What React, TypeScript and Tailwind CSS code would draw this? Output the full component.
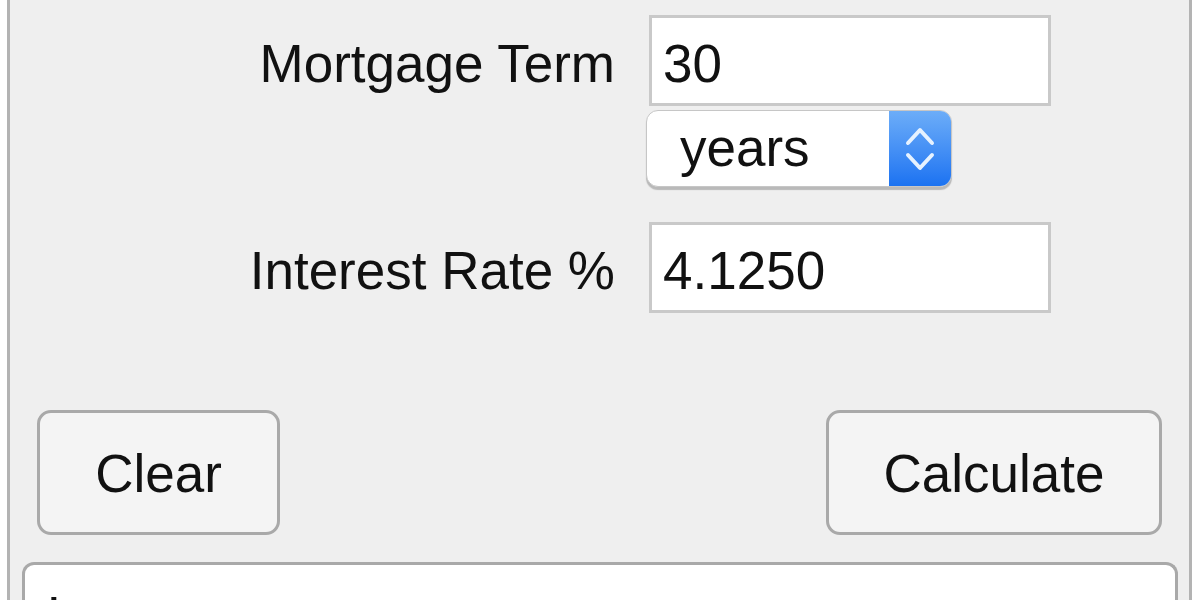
import React from 'react';

const font = { fontFamily: '"Liberation Sans", Arial, Helvetica, sans-serif' };

function TextBox({ value }: { value: string }) {
  return (
    <div className="w-[402px] h-[91px] border-[3px] border-[#c9c9c9] bg-white flex items-center pl-[11px]">
      <span className="text-[53px] leading-none text-[#111] pt-[6px]">{value}</span>
    </div>
  );
}

function Stepper() {
  return (
    <svg width="30" height="44" viewBox="0 0 30 44" fill="none">
      <path d="M3 16 L15 3 L27 16" stroke="#e6f2ff" strokeWidth="4" strokeLinecap="round" strokeLinejoin="round" />
      <path d="M3 28 L15 41 L27 28" stroke="#e6f2ff" strokeWidth="4" strokeLinecap="round" strokeLinejoin="round" />
    </svg>
  );
}

export default function App() {
  return (
    <div className="min-h-screen bg-white text-[#111]" style={font}>
      <div className="ml-[7px] w-[1185px] h-[600px] border-x-[3px] border-[#b3b3b3] bg-[#efefef] overflow-hidden flex flex-col">
        {/* Mortgage term */}
        <div className="flex items-center pt-[15px]">
          <div className="w-[605px] text-right text-[53px] leading-none pt-[6px]">Mortgage Term</div>
          <div className="ml-[34px]">
            <TextBox value="30" />
          </div>
        </div>

        {/* Term units select */}
        <div className="mt-[4px] pl-[636px]">
          <div className="w-[306px] h-[77px] rounded-[12px] border border-[#c6c6c6] bg-white shadow-[0_3px_1px_#b9b9b9] flex overflow-hidden">
            <div className="flex-1 flex items-center pl-[33px]">
              <span className="text-[53px] leading-none pb-[2px]">years</span>
            </div>
            <div className="w-[62px] h-full bg-gradient-to-b from-[#6cadf8] to-[#1a72f1] flex items-center justify-center">
              <Stepper />
            </div>
          </div>
        </div>

        {/* Interest rate */}
        <div className="flex items-center mt-[35px]">
          <div className="w-[605px] text-right text-[53px] leading-none pt-[6px]">Interest Rate %</div>
          <div className="ml-[34px]">
            <TextBox value="4.1250" />
          </div>
        </div>

        {/* Buttons */}
        <div className="flex justify-between px-[27px] mt-[97px]">
          <button className="w-[243px] h-[125px] rounded-[14px] border-[3px] border-[#a9a9a9] bg-[#f4f4f4] text-[53px] leading-none pt-[2px]">
            Clear
          </button>
          <button className="w-[336px] h-[125px] rounded-[14px] border-[3px] border-[#a9a9a9] bg-[#f4f4f4] text-[53px] leading-none pt-[2px]">
            Calculate
          </button>
        </div>

        {/* Result area */}
        <div className="mt-[27px] ml-[12px] mr-[11px] flex-1 border-x-[3px] border-t-[3px] border-[#a9a9a9] rounded-t-[12px] bg-white pl-[22px] pt-[24px] overflow-hidden">
          <div className="text-[53px] leading-none">Loan</div>
        </div>
      </div>
    </div>
  );
}
